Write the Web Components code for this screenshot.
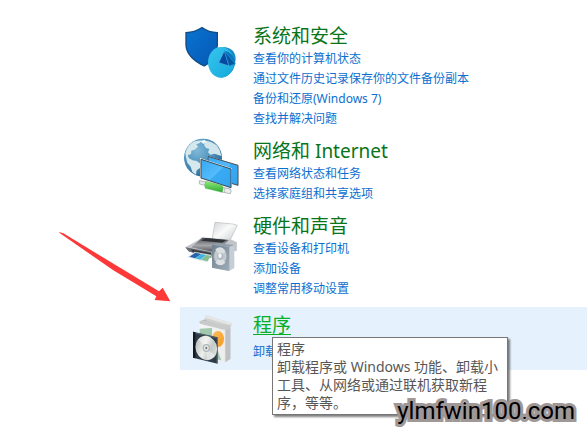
<!DOCTYPE html>
<html lang="zh-CN">
<head>
<meta charset="UTF-8">
<meta name="viewport" content="width=device-width, initial-scale=1">
<title>控制面板</title>
<style>
  body {
    margin: 0;
    background: #fff;
    font-family: "Noto Sans", "Noto Sans CJK SC", sans-serif;
  }
</style>
</head>
<body>
<control-panel>
  <panel-category heading="系统和安全">
    <panel-icon slot="icon" name="security"></panel-icon>
    <panel-link>查看你的计算机状态</panel-link>
    <panel-link>通过文件历史记录保存你的文件备份副本</panel-link>
    <panel-link>备份和还原(Windows 7)</panel-link>
    <panel-link>查找并解决问题</panel-link>
  </panel-category>
  <panel-category heading="网络和 Internet">
    <panel-icon slot="icon" name="network"></panel-icon>
    <panel-link>查看网络状态和任务</panel-link>
    <panel-link>选择家庭组和共享选项</panel-link>
  </panel-category>
  <panel-category heading="硬件和声音">
    <panel-icon slot="icon" name="hardware"></panel-icon>
    <panel-link>查看设备和打印机</panel-link>
    <panel-link>添加设备</panel-link>
    <panel-link>调整常用移动设置</panel-link>
  </panel-category>
  <panel-category heading="程序" active>
    <panel-icon slot="icon" name="programs"></panel-icon>
    <panel-link>卸载</panel-link>
    <panel-tooltip slot="tooltip" heading="程序">卸载程序或 Windows 功能、卸载小工具、从网络或通过联机获取新程序，等等。</panel-tooltip>
  </panel-category>
  <pointer-arrow slot="overlay"></pointer-arrow>
  <site-mark slot="overlay">ylmfwin100.com</site-mark>
</control-panel>

<script>
  // Drawings for panel-icon, one entry per category
  const ICONS = {
    security: {
      box: '27 27 168 168',
      art: `
        <defs>
          <linearGradient id="shield" x1="0" y1="0" x2="1" y2="1"><stop offset="0" stop-color="#0874d1"/><stop offset="1" stop-color="#0757b4"/></linearGradient>
          <linearGradient id="disc" x1="0" y1="0" x2="1" y2="1"><stop offset="0" stop-color="#38c5ed"/><stop offset="1" stop-color="#13a9dc"/></linearGradient>
        </defs>
        <path d="M33 53Q58 53 81 38Q102 53 127 53V91Q123 135 88 153Q36 128 33 91Z" fill="url(#shield)" stroke="#104c85" stroke-width="4"/>
        <path d="M144 96Q180 98 182 131Q181 169 154 184L137 188Z" fill="#168bc4"/>
        <ellipse cx="138" cy="142" rx="39" ry="46" fill="url(#disc)"/>
        <path d="M148 107Q175 110 181 147L162 151Z" fill="#0875bf"/>
        <path d="M148 107L131 143L162 153Z" fill="#0648a1" stroke="#50bae5" stroke-width="2"/>
        <path d="M148 107L181 147L162 153Z" fill="#07559f" stroke="#249fd6" stroke-width="2"/>`
    },
    network: {
      box: '27 27 168 168',
      art: `
        <defs>
          <radialGradient id="globe" cx=".35" cy=".3" r=".8"><stop offset="0" stop-color="#7fb9d9"/><stop offset=".6" stop-color="#4589b4"/><stop offset="1" stop-color="#24618e"/></radialGradient>
          <linearGradient id="screen" x1="0" y1="0" x2="1" y2="1"><stop offset="0" stop-color="#35a7f1"/><stop offset=".5" stop-color="#55bcfc"/><stop offset=".52" stop-color="#3aaaf3"/><stop offset="1" stop-color="#32a3ee"/></linearGradient>
          <linearGradient id="plug" x1="0" y1="0" x2="0" y2="1"><stop offset="0" stop-color="#92e879"/><stop offset="1" stop-color="#2aaa33"/></linearGradient>
        </defs>
        <circle cx="84" cy="83" r="57" fill="url(#globe)"/>
        <path d="M31 70Q37 45 58 34L79 31L75 39L64 43L69 50L59 59L49 62L48 72L38 76L42 85L53 91L65 93L77 101L76 113L65 121L63 134L52 126L47 110L37 98L33 82Z" fill="#d5e8ed"/>
        <path d="M91 32Q111 34 125 46L134 60L139 78L132 76L119 71L106 74L99 67L103 57L93 54L87 45Z" fill="#d0e5ec"/>
        <path d="M75 34L88 29L95 35L85 42Z" fill="#edf5f6"/>
        <path d="M98 77L190 105V169L98 138Z" fill="#e6e9e8"/>
        <path d="M99 79L189 106V166L99 139Z" fill="url(#screen)" stroke="#484f54" stroke-width="3"/>
        <path d="M75 84L170 115V179L75 148Z" fill="#f2f3f1"/>
        <path d="M78 88L168 117V173L78 144Z" fill="url(#screen)" stroke="#3d4a53" stroke-width="3"/>
        <path d="M73 152L94 156V167L73 162Z" fill="#e3e7e7" stroke="#98a2a5" stroke-width="2"/>
        <path d="M140 172L166 177Q171 184 166 191L140 186Z" fill="#eceeee" stroke="#929c9f" stroke-width="2"/>
        <path d="M149 173V188" stroke="#a8b2b4" stroke-width="2"/>
        <path d="M93 154L141 166Q147 176 141 187L91 175Q86 164 93 154Z" fill="url(#plug)" stroke="#42ae43" stroke-width="1"/>`
    },
    hardware: {
      box: '27 12 168 168',
      art: `
        <defs>
          <linearGradient id="paper" x1="0" y1="0" x2="1" y2="1"><stop offset="0" stop-color="#d2d4d6"/><stop offset=".45" stop-color="#fafafa"/><stop offset="1" stop-color="#bfc3c6"/></linearGradient>
          <linearGradient id="printer" x1="0" y1="0" x2="0" y2="1"><stop offset="0" stop-color="#484b50"/><stop offset=".55" stop-color="#a5a7ab"/><stop offset="1" stop-color="#55585d"/></linearGradient>
          <linearGradient id="speaker" x1="0" y1="0" x2="1" y2="1"><stop offset="0" stop-color="#71818f"/><stop offset="1" stop-color="#9eacb8"/></linearGradient>
        </defs>
        <path d="M120 37L174 42L187 46L161 99L111 91Z" fill="url(#paper)" stroke="#b8bbbf" stroke-width="2"/>
        <path d="M82 82L170 89L186 97L185 124L158 119L112 139L37 120L31 112L61 95Z" fill="#c1c4c8"/>
        <path d="M82 83L161 90L146 106L112 125L49 112Z" fill="url(#printer)"/>
        <path d="M92 84L154 90L142 98L78 92Z" fill="#303338"/>
        <path d="M31 112L109 126V139L42 125Z" fill="#696d73"/>
        <path d="M47 118L109 130V143L56 131Z" fill="#363a40"/>
        <path d="M59 126L109 135L97 156L38 141Z" fill="#f0f3f4" stroke="#c3c9cd" stroke-width="1"/>
        <path d="M61 128L79 132L60 145L43 140Z" fill="#2764a9"/>
        <path d="M79 132L94 135L76 149L60 145Z" fill="#42b3de"/>
        <path d="M94 135L108 137L97 154L78 149Z" fill="#83bf91"/>
        <path d="M111 104L162 109L178 105V174L162 183L111 173Z" fill="#c6ced5"/>
        <path d="M111 104L126 100L178 105L163 110Z" fill="#8f9fac"/>
        <path d="M111 104L163 110V183L111 173Z" fill="url(#speaker)"/>
        <ellipse cx="136" cy="139" rx="20" ry="25" fill="#c3c9cd" stroke="#8a97a2" stroke-width="2"/>
        <path d="M136 139L121 118Q139 103 151 124ZM136 139L151 158Q136 173 121 158Z" fill="#dde0e2"/>
        <ellipse cx="136" cy="139" rx="9" ry="11" fill="#aeb7be"/>
        <ellipse cx="135" cy="137" rx="5" ry="7" fill="#f5f6f6"/>`
    },
    programs: {
      box: '27 39 168 168',
      art: `
        <defs>
          <linearGradient id="carton" x1="0" y1="0" x2="1" y2="0"><stop offset="0" stop-color="#f6f6f6"/><stop offset=".8" stop-color="#ededed"/><stop offset="1" stop-color="#cecece"/></linearGradient>
          <linearGradient id="cd" x1="0" y1="0" x2="1" y2="1"><stop offset="0" stop-color="#a9b0ae"/><stop offset=".45" stop-color="#eef0ed"/><stop offset=".65" stop-color="#c2c9c6"/><stop offset="1" stop-color="#f0f1ee"/></linearGradient>
          <linearGradient id="orange" x1="0" y1="0" x2="1" y2="1"><stop offset="0" stop-color="#ffbd58"/><stop offset="1" stop-color="#f29a24"/></linearGradient>
        </defs>
        <path d="M73 65L150 82L166 76V177L150 187L73 168Z" fill="url(#carton)"/>
        <path d="M151 82L166 77V177L151 187Z" fill="#bfc1c2"/>
        <path d="M73 65L91 58L150 73L151 84Z" fill="#888c8e"/>
        <path d="M91 45L172 70L169 78L149 80L90 61Z" fill="#d1d3d3"/>
        <path d="M91 45L172 70L168 76L91 53Z" fill="#e6e6e5"/>
        <path d="M73 65L85 60L151 75L166 75L163 87L147 89L74 71Z" fill="#c9cbcb"/>
        <path d="M74 86L111 84V105L139 181L119 177L74 103Z" fill="#9fc8ac"/>
        <ellipse cx="129" cy="117" rx="18" ry="24" fill="url(#orange)"/>
        <path d="M54 95L128 112V191L54 173Z" fill="#2f3c48"/>
        <path d="M54 95L61 97V175L54 173Z" fill="#14191f"/>
        <path d="M62 99L127 114L126 189" fill="none" stroke="#677681" stroke-width="2"/>
        <ellipse cx="94" cy="144" rx="32" ry="37" transform="rotate(-20 94 144)" fill="url(#cd)"/>
        <path d="M94 144L70 119Q82 104 96 110ZM94 144L119 166Q108 181 95 179Z" fill="#fff" opacity=".45"/>
        <ellipse cx="94" cy="144" rx="11" ry="12" fill="#aeb6b5"/>
        <ellipse cx="94" cy="144" rx="7" ry="8" fill="#e9eceb"/>
        <ellipse cx="94" cy="144" rx="3" ry="4" fill="#6c7779"/>`
    }
  };

  class ControlPanel extends HTMLElement {
    constructor() {
      super();
      this.attachShadow({ mode: 'open' });
      this.shadowRoot.innerHTML = `
        <style>
          :host {
            display: block;
            position: relative;
          }
          main {
            display: flex;
            flex-direction: column;
            padding: 18px 0 67px 180px;
          }
        </style>
        <main><slot></slot></main>
        <slot name="overlay"></slot>
      `;
    }
  }

  class PanelCategory extends HTMLElement {
    constructor() {
      super();
      this.attachShadow({ mode: 'open' });
      this.shadowRoot.innerHTML = `
        <style>
          :host {
            display: block;
            position: relative;
          }
          section {
            display: flex;
            align-items: flex-start;
            gap: 13px;
            padding: 6px 0 4px 4px;
          }
          .content {
            display: flex;
            flex-direction: column;
            flex: 1;
          }
          h2 {
            margin: 0 0 1px;
            font-size: 19px;
            font-weight: 400;
            line-height: 24px;
          }
          h2 a {
            color: #08751a;
            text-decoration: none;
          }
          /* hovered category */
          :host([active]) {
            margin-top: 4px;
            background: #e5f1fd;
          }
          :host([active]) section {
            padding-bottom: 1px;
          }
          :host([active]) .content {
            gap: 4px;
          }
          :host([active]) h2 a {
            color: #06b025;
            text-decoration: underline;
            text-decoration-thickness: 1px;
            text-underline-offset: 2px;
          }
        </style>
        <section>
          <slot name="icon"></slot>
          <div class="content">
            <h2><a href="#">${this.getAttribute('heading')}</a></h2>
            <slot></slot>
          </div>
        </section>
        <slot name="tooltip"></slot>
      `;
    }
  }

  class PanelLink extends HTMLElement {
    constructor() {
      super();
      this.attachShadow({ mode: 'open' });
      this.shadowRoot.innerHTML = `
        <style>
          :host {
            display: block;
            font-size: 12px;
            line-height: 20px;
          }
          a {
            color: #0b6fd0;
            text-decoration: none;
          }
          a:hover {
            text-decoration: underline;
          }
        </style>
        <a href="#"><slot></slot></a>
      `;
    }
  }

  class PanelIcon extends HTMLElement {
    constructor() {
      super();
      this.attachShadow({ mode: 'open' });
      const icon = ICONS[this.getAttribute('name')];
      this.shadowRoot.innerHTML = `
        <style>
          :host {
            display: block;
            flex: none;
            width: 56px;
            height: 56px;
          }
          svg {
            display: block;
            width: 100%;
            height: 100%;
            overflow: visible;
          }
        </style>
        <svg viewBox="${icon.box}" aria-hidden="true">${icon.art}</svg>
      `;
    }
  }

  class PanelTooltip extends HTMLElement {
    constructor() {
      super();
      this.attachShadow({ mode: 'open' });
      this.shadowRoot.innerHTML = `
        <style>
          :host {
            position: absolute;
            top: 30px;
            left: 92px;
            z-index: 1;
            box-sizing: border-box;
            width: 236px;
            padding: 2px 4px;
            border: 1px solid #767676;
            background: #fff;
            box-shadow: 2px 2px 2px rgba(0, 0, 0, .5);
            color: #575757;
            font-size: 14px;
            line-height: 18px;
          }
          p {
            margin: 0;
          }
        </style>
        <p>${this.getAttribute('heading')}</p>
        <p><slot></slot></p>
      `;
    }
  }

  class PointerArrow extends HTMLElement {
    constructor() {
      super();
      this.attachShadow({ mode: 'open' });
      this.shadowRoot.innerHTML = `
        <style>
          :host {
            position: absolute;
            top: 230px;
            left: 58px;
            pointer-events: none;
          }
          svg {
            display: block;
          }
        </style>
        <svg width="114" height="74" viewBox="24 30 342 222" aria-hidden="true">
          <path d="M27 36L40 40L327 214L338 203L361 244L314 240L319 229L190 151L29 39Z" fill="#fc3838"/>
        </svg>
      `;
    }
  }

  class SiteMark extends HTMLElement {
    constructor() {
      super();
      this.attachShadow({ mode: 'open' });
      this.shadowRoot.innerHTML = `
        <style>
          :host {
            position: absolute;
            right: 12px;
            bottom: 12px;
            z-index: 2;
            color: #000;
            font-family: Roboto, sans-serif;
            font-size: 24px;
            font-weight: 400;
            line-height: 28px;
            -webkit-text-stroke: 6px #a09797;
            paint-order: stroke fill;
            stroke-linejoin: round;
          }
        </style>
        <slot></slot>
      `;
    }
  }

  customElements.define('control-panel', ControlPanel);
  customElements.define('panel-category', PanelCategory);
  customElements.define('panel-link', PanelLink);
  customElements.define('panel-icon', PanelIcon);
  customElements.define('panel-tooltip', PanelTooltip);
  customElements.define('pointer-arrow', PointerArrow);
  customElements.define('site-mark', SiteMark);
</script>
</body>
</html>
